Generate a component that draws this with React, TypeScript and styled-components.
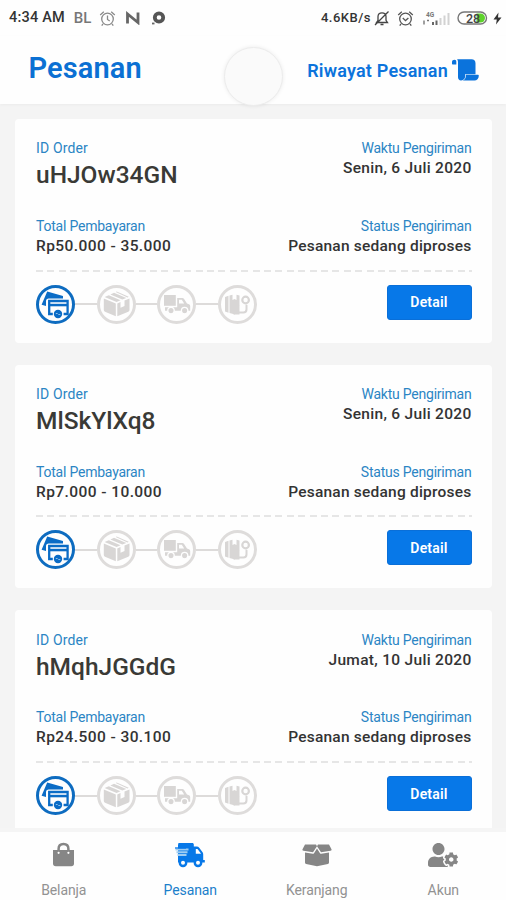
import React from "react";
import styled, { createGlobalStyle } from "styled-components";
import { FaUserCog } from "react-icons/fa";

const GlobalStyle = createGlobalStyle`
  * { box-sizing: border-box; }
  body { margin: 0; background: #f4f4f4; font-family: Roboto, "Noto Sans", sans-serif; }
`;

const Screen = styled.div`
  width: 506px;
  height: 900px;
  display: flex;
  flex-direction: column;
  overflow: hidden;
  background: #f4f4f4;
`;

const StatusBar = styled.div`
  height: 36px;
  flex: none;
  display: flex;
  justify-content: space-between;
  align-items: center;
  padding: 0 4px 0 9px;
  background: #fefefe;
  color: #333;
`;

const StatusGroup = styled.div`
  display: flex;
  align-items: center;
  height: 20px;
`;

const StatusText = styled.span<{ $size: number; $spacing?: number; $color?: string; $gap: number }>`
  font-size: ${(p) => p.$size}px;
  font-weight: 500;
  letter-spacing: ${(p) => p.$spacing ?? 0}px;
  color: ${(p) => p.$color ?? "#333"};
  margin-right: ${(p) => p.$gap}px;
  line-height: 20px;
  white-space: nowrap;
`;

const StatusIcon = styled.svg<{ $gap?: number }>`
  display: block;
  flex: none;
  margin-right: ${(p) => p.$gap ?? 0}px;
`;

const Header = styled.header`
  position: relative;
  height: 68px;
  flex: none;
  display: flex;
  justify-content: space-between;
  align-items: center;
  padding: 0 27px 0 28.5px;
  background: #fefefe;
  box-shadow: 0 1px 3px rgba(0, 0, 0, 0.04);
`;

const Title = styled.h1`
  margin: 0 0 4px;
  font-size: 29px;
  line-height: 34px;
  font-weight: 600;
  letter-spacing: 0.1px;
  color: #0b70d3;
`;

const HistoryLink = styled.a`
  display: flex;
  align-items: center;
  gap: 4px;
  color: #0b73dc;
  font-size: 18px;
  line-height: 22px;
  font-weight: 600;
  letter-spacing: 0.2px;
  svg { display: block; }
`;

const HistoryText = styled.span`
  padding-top: 1px;
`;

const TouchDot = styled.div`
  position: absolute;
  left: 224px;
  top: 11px;
  width: 59px;
  height: 59px;
  border-radius: 50%;
  background: #fafafa;
  border: 1px solid #ececec;
  box-shadow: 0 0 4px rgba(0, 0, 0, 0.08);
`;

const OrderList = styled.main`
  flex: 1;
  min-height: 0;
  overflow: hidden;
  display: flex;
  flex-direction: column;
  gap: 22px;
  padding: 15px 14px 0 14.5px;
`;

const Card = styled.article`
  flex: none;
  height: 223.7px;
  border-radius: 4px;
  background: #fefefe;
  padding: 19.4px 20.5px 0 21.5px;
`;

const Pair = styled.div<{ $height: number }>`
  display: flex;
  justify-content: space-between;
  height: ${(p) => p.$height}px;
`;

const Field = styled.div<{ $right?: boolean }>`
  display: flex;
  flex-direction: column;
  align-items: ${(p) => (p.$right ? "flex-end" : "flex-start")};
  white-space: nowrap;
`;

const Label = styled.span<{ $spacing?: number }>`
  font-size: 14px;
  line-height: 20px;
  letter-spacing: ${(p) => p.$spacing ?? -0.22}px;
  color: #2b85c4;
`;

const OrderId = styled.span`
  font-size: 24.5px;
  line-height: 30px;
  font-weight: 500;
  margin-top: 2px;
  color: #3a3a36;
`;

const Value = styled.span<{ $spacing?: number }>`
  font-size: 15.5px;
  line-height: 20px;
  font-weight: 500;
  letter-spacing: ${(p) => p.$spacing ?? 0.22}px;
  color: #333;
`;

const Divider = styled.div`
  height: 2px;
  margin-top: -1px;
  background: repeating-linear-gradient(90deg, #e6e6e6 0 7px, transparent 7px 11.4px);
`;

const Footer = styled.div`
  display: flex;
  justify-content: space-between;
  align-items: flex-start;
  padding-top: 13px;
`;

const Steps = styled.div`
  display: flex;
  align-items: center;
`;

const Step = styled.div<{ $active?: boolean }>`
  width: 39px;
  height: 39px;
  border-radius: 50%;
  border: ${(p) => (p.$active ? "3px solid #0e6cc0" : "3px solid #dedcdb")};
  color: ${(p) => (p.$active ? "#0b6cc6" : "#d8d6d5")};
  display: flex;
  align-items: center;
  justify-content: center;
  svg { display: block; flex: none; }
`;

const StepLine = styled.div`
  width: 21.5px;
  height: 2px;
  background: #dddbda;
`;

const DetailButton = styled.button`
  width: 85px;
  height: 35px;
  border: 1px solid #0a6fd8;
  border-radius: 3px;
  padding: 0;
  background: #0778e8;
  color: #fff;
  font-family: inherit;
  font-size: 14px;
  font-weight: 600;
  letter-spacing: 0.2px;
`;

const TabBar = styled.nav`
  height: 72px;
  flex: none;
  display: grid;
  grid-template-columns: repeat(4, 1fr);
  background: #fefefe;
  border-top: 4px solid #f5f5f5;
`;

const Tab = styled.div<{ $active?: boolean }>`
  display: flex;
  flex-direction: column;
  align-items: center;
  padding-left: 1px;
  color: ${(p) => (p.$active ? "#0778e8" : "#868686")};
`;

const TabIcon = styled.div`
  height: 28px;
  margin-top: 9px;
  display: flex;
  align-items: center;
  svg { display: block; }
`;

const TabLabel = styled.span<{ $active?: boolean }>`
  margin-top: 11px;
  font-size: 14px;
  line-height: 20px;
  letter-spacing: -0.1px;
  color: ${(p) => (p.$active ? "#1b7fcb" : "#929292")};
`;

const AlarmIcon = ({ gap, check, color }: { gap: number; check?: boolean; color: string }) => (
  <StatusIcon $gap={gap} width="17" height="17" viewBox="0 0 17 17" fill="none" stroke={color} strokeWidth="1.3">
    <circle cx="8.5" cy="9" r="5.8" />
    <path d="M1.2 5 4.8 1.8M15.8 5 12.2 1.8M4 14l-1.3 1.6M13 14l1.3 1.6" />
    <path d={check ? "m5.8 8 2.7 2.6L11.4 8" : "M8.5 5.5V9.5l2.2 1.5"} />
  </StatusIcon>
);

const ScrollIcon = () => (
  <svg width="27" height="23" viewBox="0 0 27 23" fill="currentColor">
    <path d="M2.5.8C3.800.8 4.300 1.700 4.300 3v2.500H1C.3 5.500 0 5.100 0 4.500V3C0 1.700 1 .8 2.500.8Z" />
    <path d="M5 .3h14.500c2.500 0 4 1.500 4 4v11H13v3c0 1.800-2.300 3.200-4 3.200-1.800 0-3-1.400-3-3.200V3.300C6 2 5.700 1.100 5 .3Z" />
    <path d="M13.700 15.800h12c.7 0 1.100.4 1.100 1 0 2.900-2 4.700-4.300 4.700H10.800c1.900-.8 2.900-2.100 2.900-4Z" />
  </svg>
);

const CardsIcon = () => (
  <svg width="39" height="39" viewBox="0 0 39 39">
    <path d="M11.2 6.600 27 11V13.600H12.800c-1.700 0-2.800 1-2.800 2.700V21L5.600 19.800Z" fill="currentColor" />
    <path d="M16.800 29h-3.600V16h18.400v13h-4" fill="none" stroke="currentColor" strokeWidth="2.3" />
    <path d="M13 18.800h19V21.300H13Z" fill="currentColor" />
    <circle cx="22" cy="29" r="4.200" fill="currentColor" />
    <path d="M19.800 28.500h1.800M22.300 29.500h2" stroke="#9cc8ee" strokeWidth=".9" />
  </svg>
);

const PackageIcon = () => (
  <svg width="39" height="39" viewBox="0 0 39 39" fill="currentColor">
    <path d="M6.800 13.500 18.800 18.400V31.300L8 26.800c-.8-.4-1.200-1-1.200-1.800Z" />
    <path d="m20.300 18.400 3.200-1.300v5.600l4-1.600V15.500l5-2V25c0 .8-.4 1.400-1.200 1.800L20.300 31.300Z" />
    <path d="m7.600 12 4.200-1.800L23.500 15.300l-3.900 1.800ZM13.400 9.500l3.600-1.700L29.300 13 25.300 14.600ZM18.700 7l1-.4 12 5.200-1.200.6Z" />
  </svg>
);

const TruckIcon = () => (
  <svg width="39" height="39" viewBox="0 0 39 39" fill="currentColor">
    <path d="M7 10h11.800v10.800H7Z" />
    <path fillRule="evenodd" d="M8 22.200h12.200V13H25.300c.8 0 1.400.4 1.800 1.100l2.900 4.400 2 .8c.8.4 1.200 1 1.200 1.800V25.700H8ZM22 14.800v3.700h5.200L24.800 14.800Z" />
    <circle cx="14" cy="25.600" r="3.200" stroke="#fefefe" strokeWidth="1.3" />
    <circle cx="27.600" cy="25.600" r="3.200" stroke="#fefefe" strokeWidth="1.3" />
  </svg>
);

const DeliveredIcon = () => (
  <svg width="39" height="39" viewBox="0 0 39 39" fill="none" stroke="currentColor">
    <path d="m7 12 3.500-1.200v17L7 26.500ZM11.500 10.500l3-.8v5.300l2-1 2 1V9.700l3 .9v9.600h-1.800L17 26.500V29.500l-5.500-1.500Z" fill="currentColor" stroke="none" />
    <path d="M15.500 20h6v9.500h-6Z" fill="currentColor" stroke="none" />
    <circle cx="27.600" cy="15" r="3.300" strokeWidth="2.200" />
    <path d="M28.500 20.500v3.700c0 2-1.200 3.300-3.200 3.300H19" strokeWidth="2" strokeLinecap="round" />
  </svg>
);

const BagIcon = () => (
  <svg width="23" height="26" viewBox="0 0 23 26">
    <path d="M1 8h21v13.500c0 1.700-1 2.700-2.700 2.700H3.700C2 24.200 1 23.200 1 21.500Z" fill="currentColor" />
    <path d="M6.600 10V6.700C6.600 3.500 8.600 1.900 11.500 1.900S16.400 3.500 16.400 6.700V10" fill="none" stroke="currentColor" strokeWidth="2.500" />
    <circle cx="6.600" cy="10.800" r="1.100" fill="#fefefe" />
    <circle cx="16.400" cy="10.800" r="1.100" fill="#fefefe" />
  </svg>
);

const FastTruckIcon = () => (
  <svg width="32" height="26" viewBox="0 0 32 26">
    <path fill="currentColor" fillRule="evenodd" d="M4.500 1h13.700c1 0 1.600.6 1.600 1.600V4.500h3c1 0 1.800.4 2.400 1.200l3.400 4.500c.4.600.6 1.200.6 2V18h1.600v2.500H4V3ZM21.800 7v4.800h5.300L23.500 7Z" />
    <path d="M1.500 7.500h13M2.500 10.200h11M3.500 12.900h9" stroke="#9fcdf2" strokeWidth="2" />
    <path d="M1 6h11" stroke="currentColor" strokeWidth="1.3" />
    <circle cx="9" cy="20.800" r="3.200" fill="#fefefe" stroke="currentColor" strokeWidth="2.400" />
    <circle cx="24" cy="20.800" r="3.200" fill="#fefefe" stroke="currentColor" strokeWidth="2.400" />
  </svg>
);

const OpenBoxIcon = () => (
  <svg width="30" height="24" viewBox="0 0 30 24" fill="currentColor">
    <path d="M3 1.500H14L15 3.200 11 9.300 1.500 7.700C.6 7.500.2 7 .5 6.200ZM27 1.500H16L15 3.200 19 9.300 28.500 7.700C29.400 7.500 29.800 7 29.500 6.200Z" />
    <path d="M3 9.500l7.700 1.300c.6.100 1-.1 1.300-.6l3-4.700 3 4.700c.3.500.7.700 1.300.6L27 9.500v10c0 .7-.4 1.200-1.100 1.400L15 23.300 4.100 20.900C3.400 20.700 3 20.200 3 19.500Z" />
  </svg>
);

interface Order {
  id: string;
  date: string;
  total: string;
}

const orders: Order[] = [
  { id: "uHJOw34GN", date: "Senin, 6 Juli 2020", total: "Rp50.000 - 35.000" },
  { id: "MlSkYlXq8", date: "Senin, 6 Juli 2020", total: "Rp7.000 - 10.000" },
  { id: "hMqhJGGdG", date: "Jumat, 10 Juli 2020", total: "Rp24.500 - 30.100" },
];

const OrderCard = ({ order }: { order: Order }) => (
  <Card>
    <Pair $height={77.5}>
      <Field>
        <Label $spacing={0.15}>ID Order</Label>
        <OrderId>{order.id}</OrderId>
      </Field>
      <Field $right>
        <Label>Waktu Pengiriman</Label>
        <Value $spacing={0.3}>{order.date}</Value>
      </Field>
    </Pair>
    <Pair $height={54.8}>
      <Field>
        <Label>Total Pembayaran</Label>
        <Value $spacing={0.42}>{order.total}</Value>
      </Field>
      <Field $right>
        <Label>Status Pengiriman</Label>
        <Value>Pesanan sedang diproses</Value>
      </Field>
    </Pair>
    <Divider />
    <Footer>
      <Steps>
        <Step $active><CardsIcon /></Step>
        <StepLine />
        <Step><PackageIcon /></Step>
        <StepLine />
        <Step><TruckIcon /></Step>
        <StepLine />
        <Step><DeliveredIcon /></Step>
      </Steps>
      <DetailButton>Detail</DetailButton>
    </Footer>
  </Card>
);

export default function App() {
  return (
    <>
      <GlobalStyle />
      <Screen>
        <StatusBar>
          <StatusGroup>
            <StatusText $size={14.5} $spacing={0.2} $gap={9}>4:34 AM</StatusText>
            <StatusText $size={15} $gap={8} $color="#777">BL</StatusText>
            <AlarmIcon gap={9} color="#8a8a8a" />
            <StatusIcon $gap={10} width="16" height="14" viewBox="0 0 16 14" fill="none" stroke="#666" strokeWidth="2.8">
              <path d="M2.500 12.500V3L13 11.500V1.500" />
            </StatusIcon>
            <StatusIcon width="16" height="16" viewBox="0 0 16 16">
              <circle cx="8" cy="7.500" r="4.200" fill="none" stroke="#555" strokeWidth="3.800" />
              <path d="M1 13.500h2.500" stroke="#666" strokeWidth="1.800" />
            </StatusIcon>
          </StatusGroup>
          <StatusGroup>
            <StatusText $size={13} $spacing={0.5} $gap={3}>4.6KB/s</StatusText>
            <StatusIcon $gap={7} width="16" height="17" viewBox="0 0 16 17" fill="none" stroke="#444" strokeWidth="1.3">
              <path d="M2.500 12.500h11L12 10.300V6.500C12 4.300 10.500 2.800 8 2.800S4 4.300 4 6.500v3.800ZM6.500 14.500h3M1 15 14.500 1.500" />
            </StatusIcon>
            <AlarmIcon gap={9} check color="#555" />
            <StatusIcon $gap={6} width="28" height="17" viewBox="0 0 28 17">
              <text x="3" y="6.500" fontSize="6.5" fontWeight="700" fill="#777">4G</text>
              <path d="M1 10.500v4M4 10.500h2" stroke="#777" strokeWidth="1.4" />
              <path d="M10 12v3M13.500 10.500V15" stroke="#666" strokeWidth="2" />
              <path d="M17.500 8v7M21.500 5.500V15M25.500 3v12" stroke="#d2d2d2" strokeWidth="2" />
            </StatusIcon>
            <StatusIcon $gap={5} width="31" height="14" viewBox="0 0 31 14">
              <rect x="1" y="1" width="28.5" height="12" rx="6" fill="#fefefe" stroke="#777" strokeWidth="1.4" />
              <path d="M19.500 2.500h4a4.500 4.500 0 0 1 0 9h-4Z" fill="#5ed32b" />
              <text x="9" y="11.500" fontSize="12.5" fontWeight="500" fill="#444">28</text>
            </StatusIcon>
            <StatusIcon width="9" height="13" viewBox="0 0 9 13">
              <path d="M5.500.5.500 7.500h3.300L3 12.500l5.500-7H5Z" fill="#333" />
            </StatusIcon>
          </StatusGroup>
        </StatusBar>
        <Header>
          <Title>Pesanan</Title>
          <HistoryLink>
            <HistoryText>Riwayat Pesanan</HistoryText>
            <ScrollIcon />
          </HistoryLink>
          <TouchDot />
        </Header>
        <OrderList>
          {orders.map((o) => (
            <OrderCard key={o.id} order={o} />
          ))}
        </OrderList>
        <TabBar>
          <Tab>
            <TabIcon><BagIcon /></TabIcon>
            <TabLabel>Belanja</TabLabel>
          </Tab>
          <Tab $active>
            <TabIcon><FastTruckIcon /></TabIcon>
            <TabLabel $active>Pesanan</TabLabel>
          </Tab>
          <Tab>
            <TabIcon><OpenBoxIcon /></TabIcon>
            <TabLabel>Keranjang</TabLabel>
          </Tab>
          <Tab>
            <TabIcon><FaUserCog size={30} /></TabIcon>
            <TabLabel>Akun</TabLabel>
          </Tab>
        </TabBar>
      </Screen>
    </>
  );
}
